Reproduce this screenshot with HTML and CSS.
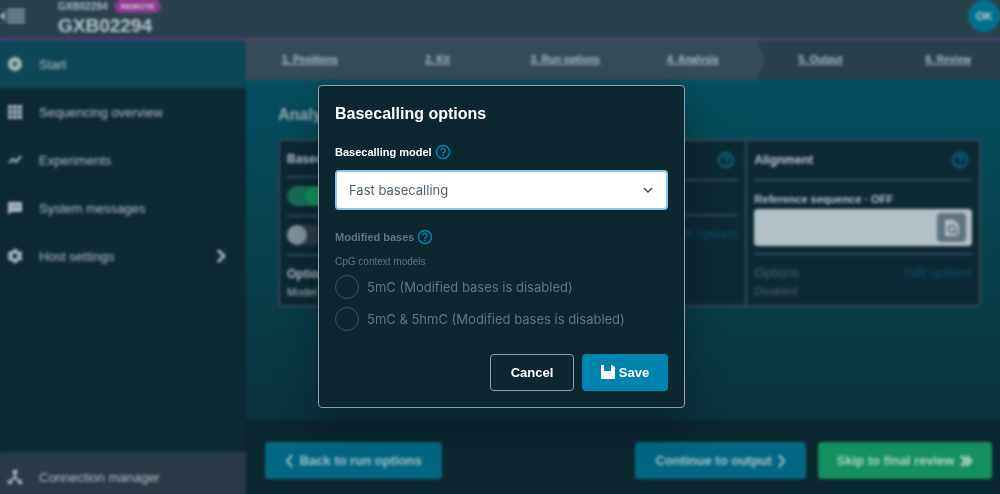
FILE: index.html
```html
<!DOCTYPE html>
<html lang="en">
<head>
  <meta charset="UTF-8">
  <meta name="viewport" content="width=device-width, initial-scale=1.0">
  <title>Basecalling options - GXB02294</title>
  <link rel="stylesheet" href="styles.css">
</head>
<body>
  <div class="app">
    <header class="topbar">
      <button class="menu-button" aria-label="Collapse menu">
        <svg width="26" height="16" viewBox="0 0 26 16"><path d="M7 2h18M7 6h18M7 10h18M7 14h18" stroke="currentColor" stroke-width="2"/><path d="M0 8l5-5v10z" fill="currentColor"/></svg>
      </button>
      <div class="device">
        <div class="device-host">GXB02294 <span class="remote">REMOTE</span></div>
        <div class="device-name">GXB02294</div>
      </div>
      <button class="avatar">OK</button>
    </header>

    <div class="body">
      <nav class="sidebar">
        <a href="#" class="nav-link active">
          <svg width="16" height="16" viewBox="0 0 16 16"><path fill="currentColor" fill-rule="evenodd" d="M8 1a7 7 0 1 0 0 14A7 7 0 0 0 8 1zM6.300 4.800v6.400L11 8z"/></svg>
          Start
        </a>
        <a href="#" class="nav-link">
          <svg width="16" height="16" viewBox="0 0 16 16"><path fill="currentColor" d="M1 1h4v4H1zM6 1h4v4H6zM11 1h4v4h-4zM1 6h4v4H1zM6 6h4v4H6zM11 6h4v4h-4zM1 11h4v4H1zM6 11h4v4H6zM11 11h4v4h-4z"/></svg>
          Sequencing overview
        </a>
        <a href="#" class="nav-link">
          <svg width="16" height="16" viewBox="0 0 16 16"><path d="M2 11l4-4 3 3 5-6" fill="none" stroke="currentColor" stroke-width="2"/></svg>
          Experiments
        </a>
        <a href="#" class="nav-link">
          <svg width="16" height="16" viewBox="0 0 16 16"><path fill="currentColor" fill-rule="evenodd" d="M1 2h14v10H4l-3 3zM4 6v1h2V6zM7 6v1h2V6zM10 6v1h2V6z"/></svg>
          System messages
        </a>
        <a href="#" class="nav-link">
          <svg width="16" height="16" viewBox="0 0 16 16"><path fill="currentColor" fill-rule="evenodd" d="M6 1h4l.5 2 1.500.8 2-.6 1.500 3L14 7.500v1l1.500 1.300-1.500 3-2-.6-1.500.8-.5 2H6l-.5-2-1.500-.8-2 .6-1.500-3L2 8.500v-1L.5 6.200l1.500-3 2 .6L5.500 3zM8 5.500a2.500 2.500 0 1 0 0 5 2.500 2.500 0 0 0 0-5z"/></svg>
          Host settings
          <svg class="nav-arrow" width="10" height="16" viewBox="0 0 10 16"><path d="M2 2l6 6-6 6" fill="none" stroke="currentColor" stroke-width="3"/></svg>
        </a>
        <a href="#" class="nav-link connection">
          <svg width="16" height="16" viewBox="0 0 16 16"><path d="M8 3v6M8 8l-5 5M8 8l5 5" fill="none" stroke="currentColor" stroke-width="2"/><circle cx="8" cy="3" r="2.500" fill="currentColor"/><path d="M1 11h4v4H1zM11 11h4v4h-4z" fill="currentColor"/></svg>
          Connection manager
        </a>
      </nav>

      <main class="main">
        <nav class="steps">
          <a href="#" class="step done">1. Positions</a>
          <a href="#" class="step done">2. Kit</a>
          <a href="#" class="step done">3. Run options</a>
          <a href="#" class="step done current">4. Analysis</a>
          <a href="#" class="step">5. Output</a>
          <a href="#" class="step">6. Review</a>
        </nav>

        <div class="content">
          <h1>Analysis</h1>
          <div class="cards">
            <section class="card models">
              <h2>Basecalling</h2>
              <div class="card-row"><input type="checkbox" class="toggle" aria-label="Basecalling" checked></div>
              <div class="card-row"><input type="checkbox" class="toggle" aria-label="Modified bases"></div>
              <div class="card-row options">
                <h3>Options</h3>
                <p>Model</p>
              </div>
            </section>
            <section class="card">
              <h2>Barcoding
                <svg class="help" width="16" height="16" viewBox="0 0 16 16"><circle cx="8" cy="8" r="7"/><path d="M5.800 6.500a2.200 2.200 0 1 1 3.400 1.800C8.300 8.800 8 9 8 10M8 11v1.500"/></svg>
              </h2>
              <div class="card-row blank"></div>
              <div class="card-row options off">
                <h3>Options <a href="#">Edit options</a></h3>
              </div>
            </section>
            <section class="card">
              <h2>Alignment
                <svg class="help" width="16" height="16" viewBox="0 0 16 16"><circle cx="8" cy="8" r="7"/><path d="M5.800 6.500a2.200 2.200 0 1 1 3.400 1.800C8.300 8.800 8 9 8 10M8 11v1.500"/></svg>
              </h2>
              <div class="card-row reference">
                <label for="reference">Reference sequence · OFF</label>
                <div class="file-field">
                  <input type="text" id="reference">
                  <button aria-label="Browse">
                    <svg width="16" height="18" viewBox="0 0 16 18"><path fill="#b2bfc5" d="M1 1h9l5 5v11H1z"/><circle cx="8" cy="10" r="3.500" fill="none" stroke="#60747d" stroke-width="2"/><path d="M10 12l4 4" stroke="#60747d" stroke-width="2"/></svg>
                  </button>
                </div>
              </div>
              <div class="card-row options off">
                <h3>Options <a href="#">Edit options</a></h3>
                <p>Disabled</p>
              </div>
            </section>
          </div>
        </div>

        <footer class="footer">
          <button class="step-button">
            <svg width="8" height="14" viewBox="0 0 8 14"><path d="M7 1L2 7l5 6" fill="none" stroke="currentColor" stroke-width="2"/></svg>
            Back to run options
          </button>
          <button class="step-button next">
            Continue to output
            <svg width="8" height="14" viewBox="0 0 8 14"><path d="M1 1l5 6-5 6" fill="none" stroke="currentColor" stroke-width="2"/></svg>
          </button>
          <button class="step-button green">
            Skip to final review
            <svg width="13" height="14" viewBox="0 0 13 14"><path d="M1 2l5 5-5 5M6 2l5 5-5 5" fill="none" stroke="currentColor" stroke-width="3"/></svg>
          </button>
        </footer>
      </main>
    </div>
  </div>

  <div class="overlay">
    <form class="dialog" role="dialog" aria-labelledby="dialog-title">
      <h2 id="dialog-title">Basecalling options</h2>

      <div class="field-label">
        <label for="model">Basecalling model</label>
        <svg class="help" width="16" height="16" viewBox="0 0 16 16"><circle cx="8" cy="8" r="6.500"/><path d="M5.900 6.500a2.100 2.100 0 1 1 3.300 1.700C8.400 8.700 8 9 8 9.900M8 10.800v1.300"/></svg>
      </div>
      <div class="select-box">
        <select id="model">
          <option>Fast basecalling</option>
          <option>High-accuracy basecalling</option>
        </select>
        <svg width="10" height="6" viewBox="0 0 10 6"><path d="M1 1l4 4 4-4" fill="none" stroke="#41525c" stroke-width="1.500"/></svg>
      </div>

      <fieldset disabled>
        <legend class="field-label">
          Modified bases
          <svg class="help" width="16" height="16" viewBox="0 0 16 16"><circle cx="8" cy="8" r="6.500"/><path d="M5.900 6.500a2.100 2.100 0 1 1 3.300 1.700C8.400 8.700 8 9 8 9.900M8 10.800v1.300"/></svg>
        </legend>
        <p class="hint">CpG context models</p>
        <label class="radio"><input type="radio" name="mods"> 5mC (Modified bases is disabled)</label>
        <label class="radio"><input type="radio" name="mods"> 5mC &amp; 5hmC (Modified bases is disabled)</label>
      </fieldset>

      <div class="actions">
        <button type="button" class="cancel">Cancel</button>
        <button type="button" class="save">
          <svg width="14" height="14" viewBox="0 0 14 14"><path fill="#fff" d="M0 0h3v6h7V0h1l3 2v11a1 1 0 0 1-1 1H1a1 1 0 0 1-1-1z"/></svg>
          Save
        </button>
      </div>
    </form>
  </div>
</body>
</html>
```
FILE: styles.css
```css
* {
  margin: 0;
  padding: 0;
  box-sizing: border-box;
}

html, body {
  height: 100%;
  font-family: "Liberation Sans", Arial, sans-serif;
  font-size: 13px;
  background: #0b2730;
  color: #a9b8bf;
}

a {
  color: inherit;
}

button, input, select {
  font: inherit;
}

.app {
  height: 100vh;
  display: flex;
  flex-direction: column;
  overflow: hidden;
}

/* Top bar */
.topbar {
  display: flex;
  height: 40px;
  flex-shrink: 0;
  background: #29414d;
  border-bottom: 2px solid #653b75;
}

.menu-button {
  width: 58px;
  background: none;
  border: none;
  color: #9fafb6;
  text-align: left;
  padding-bottom: 6px;
  line-height: 0;
  flex-shrink: 0;
}

.device {
  flex: 1;
}

.device-host {
  display: flex;
  align-items: center;
  gap: 7px;
  height: 13px;
  font-size: 10px;
  font-weight: 700;
}

.remote {
  background: #8b3a90;
  border-radius: 7px;
  padding: 0 6px;
  line-height: 13px;
  font-size: 8px;
  color: #d6c5dc;
}

.device-name {
  font-size: 19px;
  line-height: 26px;
  font-weight: 700;
  color: #b6c3c8;
}

.avatar {
  width: 32px;
  height: 32px;
  border: none;
  border-radius: 50%;
  background: #03708e;
  color: #b5ced7;
  font-size: 11px;
  font-weight: 700;
}

/* Sidebar */
.body {
  flex: 1;
  display: flex;
  min-height: 0;
}

.sidebar {
  width: 246px;
  flex-shrink: 0;
  display: flex;
  flex-direction: column;
  background: #0b2a34;
}

.nav-link {
  display: flex;
  align-items: center;
  gap: 16px;
  height: 48px;
  padding: 0 20px 0 7px;
  color: #abb9bf;
  text-decoration: none;
}

.nav-link.active {
  background: #0d4657;
}

.nav-arrow {
  margin-left: auto;
}

.connection {
  height: 42px;
  margin-top: auto;
  padding-top: 8px;
  background: #273a45;
}

/* Main content */
.main {
  flex: 1;
  min-width: 0;
  display: flex;
  flex-direction: column;
  overflow: hidden;
  background: linear-gradient(#055064, #0a323d 380px);
}

.steps {
  display: flex;
  height: 40px;
  flex-shrink: 0;
  margin-right: -12px;
  background: #29404c;
}

.step {
  flex: 1;
  text-align: center;
  line-height: 40px;
  font-size: 10px;
  font-weight: 700;
  color: #a9b7bd;
}

.step.done {
  background: #364c58;
}

.step.current {
  position: relative;
}

.step.current::after {
  content: "";
  position: absolute;
  left: 100%;
  top: 0;
  width: 8px;
  height: 40px;
  background: #364c58;
  clip-path: polygon(0 0, 100% 50%, 0 100%);
}

.content {
  flex: 1;
  padding: 25px 19px 0 32px;
}

.content h1 {
  font-size: 16px;
  line-height: 20px;
  font-weight: 700;
  color: #93aab3;
}

.cards {
  display: flex;
  margin-top: 14px;
  height: 168px;
  border: 2px solid #2f4954;
  border-radius: 4px;
  background: #0c2a34;
}

.card {
  flex: 1 1 0;
  min-width: 0;
  padding: 0 7px;
}

.card + .card {
  border-left: 2px solid #2f4954;
}

.card h2 {
  display: flex;
  justify-content: space-between;
  align-items: center;
  height: 38px;
  font-size: 12px;
  font-weight: 700;
  color: #b2bfc5;
}

.card.models h2 {
  height: 35px;
}

.card-row {
  height: 39px;
  border-top: 2px solid #2f4954;
  padding-top: 8px;
}

.blank {
  height: 35px;
}

.reference {
  height: 74px;
}

.reference label {
  display: block;
  font-size: 11px;
  line-height: 20px;
  font-weight: 700;
  color: #b2bfc5;
}

.file-field {
  display: flex;
  align-items: center;
  height: 37px;
  padding-right: 6px;
  border-radius: 4px;
  background: #b2bfc5;
}

.file-field input {
  flex: 1;
  min-width: 0;
  height: 100%;
  border: none;
  background: none;
}

.file-field button {
  width: 29px;
  height: 29px;
  border: none;
  border-radius: 4px;
  background: #60747d;
  line-height: 0;
}

.options h3 {
  display: flex;
  justify-content: space-between;
  font-size: 12px;
  line-height: 20px;
  font-weight: 700;
}

.options p {
  font-size: 11px;
  line-height: 16px;
}

.options.off {
  color: #465d67;
}

.options.off h3 {
  font-size: 13px;
  font-weight: 400;
}

.options a {
  color: #074a61;
  text-decoration: none;
}

.toggle {
  appearance: none;
  display: block;
  width: 38px;
  height: 20px;
  border-radius: 10px;
  background: #293b48;
}

.toggle::before {
  content: "";
  display: block;
  width: 20px;
  height: 20px;
  border-radius: 50%;
  background: #82939a;
}

.toggle:checked {
  background: #1a6b54;
}

.toggle:checked::before {
  margin-left: 18px;
  background: #14905d;
}

.help {
  fill: none;
  stroke: #0084ad;
  stroke-width: 1.500;
}

.card .help {
  margin-right: 4px;
  stroke: #056886;
  stroke-width: 2;
}

.footer {
  display: flex;
  gap: 12px;
  height: 74px;
  flex-shrink: 0;
  padding: 22px 8px 0 19px;
  background: #0b2730;
}

.step-button {
  display: flex;
  align-items: center;
  justify-content: center;
  gap: 6px;
  width: 177px;
  height: 37px;
  border: none;
  border-radius: 4px;
  background: #036783;
  color: #9fc0ca;
  font-weight: 700;
}

.step-button.next {
  width: 171px;
  margin-left: auto;
}

.step-button.green {
  width: 174px;
  background: #158f5f;
  color: #a9d2c2;
}

/* Dialog */
.overlay {
  position: fixed;
  inset: 0;
  display: flex;
  align-items: center;
  justify-content: center;
  padding: 0 0 2px 3px;
  backdrop-filter: blur(0.125rem);
}

.dialog {
  width: 367px;
  padding: 16px;
  border: 1px solid #94a1a6;
  border-radius: 4px;
  background: #0b2730;
  box-shadow: 0 16px 40px rgba(0, 0, 0, 0.3);
}

.dialog h2 {
  font-size: 16px;
  line-height: 24px;
  font-weight: 700;
  color: #fff;
}

.field-label {
  display: flex;
  align-items: center;
  gap: 3px;
  font-size: 11px;
  line-height: 16px;
  font-weight: 700;
  color: #fff;
}

.dialog h2 + .field-label {
  margin-top: 18px;
}

.select-box {
  position: relative;
  margin-top: 10px;
}

.select-box select {
  appearance: none;
  display: block;
  width: 100%;
  height: 40px;
  padding: 0 12px;
  border: 2px solid #8cc4ee;
  border-radius: 4px;
  background: #fff;
  color: #50626d;
  font-family: Inter, sans-serif;
}

.select-box svg {
  position: absolute;
  right: 15px;
  top: 17px;
  pointer-events: none;
}

fieldset {
  margin-top: 19px;
  border: none;
  color: #63757e;
}

fieldset .field-label {
  color: #63757e;
}

.hint {
  margin-top: 8px;
  font-size: 10px;
  line-height: 18px;
}

.radio {
  display: flex;
  align-items: center;
  gap: 8px;
  height: 32px;
  font-family: Inter, sans-serif;
}

.radio input {
  appearance: none;
  width: 24px;
  height: 24px;
  border: 1px solid #41545e;
  border-radius: 50%;
}

.actions {
  display: flex;
  justify-content: flex-end;
  gap: 8px;
  margin-top: 19px;
}

.actions button {
  display: flex;
  align-items: center;
  justify-content: center;
  gap: 4px;
  height: 37px;
  border-radius: 4px;
  color: #fff;
  font-weight: 700;
}

.cancel {
  width: 84px;
  border: 1px solid #94a1a6;
  background: none;
}

.save {
  width: 86px;
  border: none;
  background: #0084ad;
}
```
